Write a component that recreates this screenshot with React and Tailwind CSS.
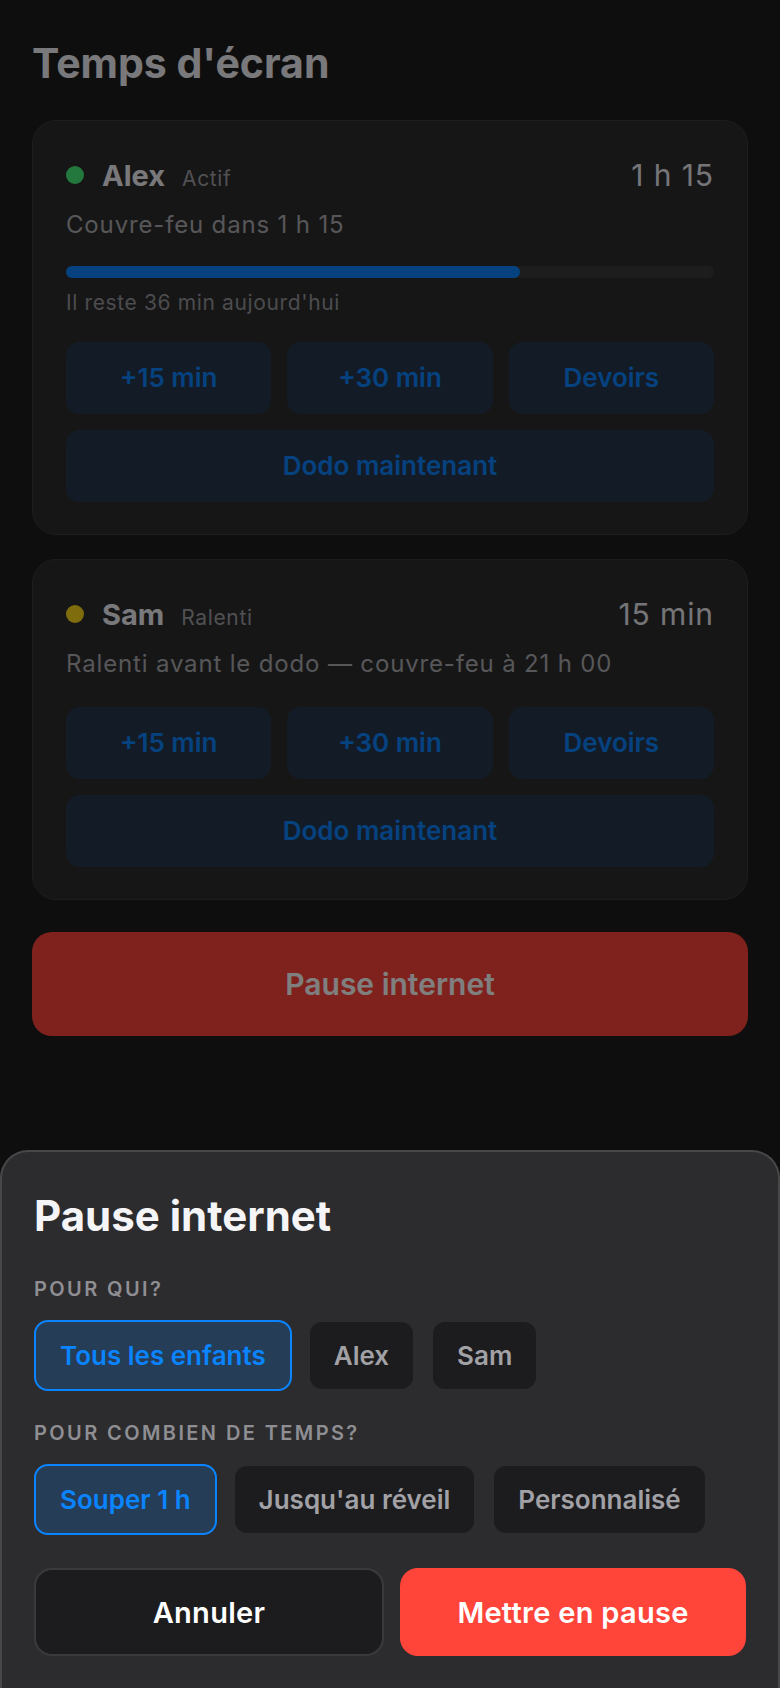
const kids = [
  {
    name: 'Alex',
    status: 'Actif',
    dot: 'bg-[#44f07a]',
    time: '1 h 15',
    note: 'Couvre-feu dans 1 h 15',
    progress: 70,
    left: "Il reste 36 min aujourd'hui",
  },
  {
    name: 'Sam',
    status: 'Ralenti',
    dot: 'bg-[#ffda1a]',
    time: '15 min',
    note: 'Ralenti avant le dodo — couvre-feu à 21 h 00',
  },
];

function ActionButton({ children }) {
  return (
    <button className="h-[72px] rounded-[14px] bg-[#0a84ff]/15 text-[26px] font-semibold leading-none text-[#0a84ff]">
      {children}
    </button>
  );
}

function KidCard({ kid }) {
  return (
    <div className="rounded-3xl border border-[#3a3a3c] bg-[#2c2c2e] px-[33px] pt-[39px] pb-8">
      <div className="flex items-center justify-between">
        <div className="flex items-center">
          <span className={`size-[18px] rounded-full ${kid.dot}`} />
          <div className="ml-[18px] flex items-baseline gap-[17px]">
            <span className="text-[29px] font-bold leading-none text-[#f2f2f7]">{kid.name}</span>
            <span className="text-[21px] leading-none tracking-[0.03em] text-[#a1a1a6]">{kid.status}</span>
          </div>
        </div>
        <span className="text-[30px] leading-none tracking-[0.03em] text-[#ebebf0]">{kid.time}</span>
      </div>

      <p className="mt-[23px] text-[24px] leading-none tracking-[0.035em] text-[#aeaeb2]">{kid.note}</p>

      {kid.progress != null && (
        <>
          <div className="mt-[29px] h-3 rounded-full bg-[#3a3a3c]">
            <div className="h-3 rounded-full bg-[#0a84ff]" style={{ width: `${kid.progress}%` }} />
          </div>
          <p className="mt-[14px] text-[21px] leading-none tracking-[0.03em] text-[#98989d]">{kid.left}</p>
        </>
      )}

      <div className={`${kid.progress != null ? 'mt-[29px]' : 'mt-[31px]'} grid grid-cols-3 gap-4`}>
        <ActionButton>+15 min</ActionButton>
        <ActionButton>+30 min</ActionButton>
        <ActionButton>Devoirs</ActionButton>
        <div className="col-span-3 grid">
          <ActionButton>Dodo maintenant</ActionButton>
        </div>
      </div>
    </div>
  );
}

function Chip({ active, children }) {
  return (
    <button
      className={
        active
          ? 'flex h-[71px] items-center rounded-[14px] border-2 border-[#0a84ff] bg-[#0a84ff]/20 px-6 text-[26px] font-semibold leading-none text-[#0a84ff]'
          : 'flex h-[71px] items-center rounded-[14px] border-2 border-transparent bg-[#1c1c1e] bg-clip-padding px-6 text-[26px] font-semibold leading-none text-[#a1a1a6]'
      }
    >
      {children}
    </button>
  );
}

export default function App() {
  return (
    <div className="relative h-[1688px] overflow-hidden bg-[#1c1c1e] font-['Inter',sans-serif]">
      <div className="flex flex-col px-8 pt-[43px]">
        <h1 className="text-[41px] font-bold leading-none text-[#f2f2f7]">Temps d'écran</h1>

        <div className="mt-9 flex flex-col gap-6">
          {kids.map(kid => (
            <KidCard key={kid.name} kid={kid} />
          ))}
        </div>

        <button className="mt-8 h-[104px] rounded-[20px] bg-[#ff453a] text-[30px] font-semibold leading-none text-white">
          Pause internet
        </button>
      </div>

      {/* backdrop */}
      <div className="absolute inset-0 bg-black/50" />

      {/* sheet */}
      <div className="absolute inset-x-0 bottom-0 rounded-t-[28px] border-2 border-b-0 border-[#48484a] bg-[#2c2c2e] px-8 pt-[43px] pb-8">
        <h2 className="text-[42px] font-bold leading-none text-[#f5f5f7]">Pause internet</h2>

        <p className="mt-[42px] text-[20px] font-semibold uppercase leading-none tracking-[0.12em] text-[#8e8e93]">
          Pour qui?
        </p>
        <div className="mt-[21px] flex gap-4">
          <Chip active>Tous les enfants</Chip>
          <Chip>Alex</Chip>
          <Chip>Sam</Chip>
        </div>

        <p className="mt-[32px] text-[20px] font-semibold uppercase leading-none tracking-[0.12em] text-[#8e8e93]">
          Pour combien de temps?
        </p>
        <div className="mt-[21px] flex gap-4">
          <Chip active>Souper 1 h</Chip>
          <Chip>Jusqu'au réveil</Chip>
          <Chip>Personnalisé</Chip>
        </div>

        <div className="mt-[33px] flex gap-4">
          <button className="h-[88px] flex-1 rounded-[18px] border-2 border-[#3a3a3c] bg-[#1c1c1e] text-[29px] font-semibold leading-none tracking-[0.01em] text-white">
            Annuler
          </button>
          <button className="h-[88px] flex-1 rounded-[18px] bg-[#ff453a] text-[29px] font-semibold leading-none tracking-[0.01em] text-white">
            Mettre en pause
          </button>
        </div>
      </div>
    </div>
  );
}
